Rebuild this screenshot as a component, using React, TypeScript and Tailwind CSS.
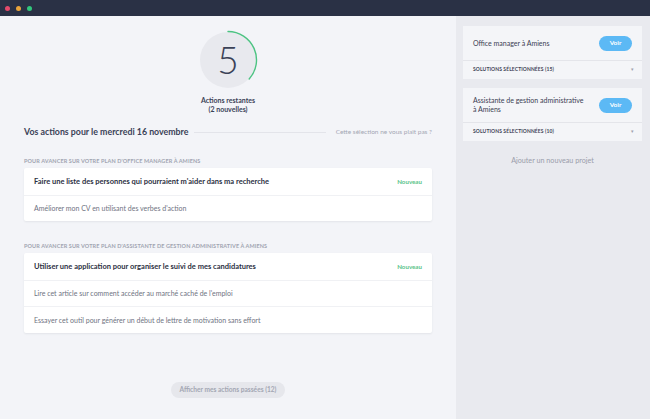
import React from 'react';

/**
 * 待办行动页面：左侧为今日行动，右侧为项目列表
 */
const sections = [
  {
    label: "Pour avancer sur votre plan d'office manager à Amiens",
    items: [
      { text: "Faire une liste des personnes qui pourraient m'aider dans ma recherche", isNew: true },
      { text: "Améliorer mon CV en utilisant des verbes d'action", isNew: false },
    ],
  },
  {
    label: "Pour avancer sur votre plan d'assistante de gestion administrative à Amiens",
    items: [
      { text: 'Utiliser une application pour organiser le suivi de mes candidatures', isNew: true },
      { text: "Lire cet article sur comment accéder au marché caché de l'emploi", isNew: false },
      { text: 'Essayer cet outil pour générer un début de lettre de motivation sans effort', isNew: false },
    ],
  },
];

const projects = [
  { title: ['Office manager à Amiens'], count: 15 },
  { title: ['Assistante de gestion administrative', 'à Amiens'], count: 10 },
];

// 进度圆环
const Counter: React.FC = () => (
  <div className="relative w-[60px] h-[60px]">
    <svg width="60" height="60" viewBox="0 0 60 60" className="absolute inset-0">
      <circle cx="30" cy="30" r="28" fill="#e8e9ee" />
      <path d="M30 1.5 A28.5 28.5 0 0 1 51.18 49.07" fill="none" stroke="#4cc382" strokeWidth="1.4" strokeLinecap="round" />
    </svg>
    <div className="absolute inset-0 flex items-center justify-center text-[37px] font-light leading-none text-[#3b4257] pb-[1px]">
      5
    </div>
  </div>
);

const App: React.FC = () => {
  return (
    <div className="w-[650px] h-[419px] flex flex-col overflow-hidden bg-[#f3f4f8]" style={{ fontFamily: 'Lato, "Open Sans", sans-serif' }}>
      {/* 窗口标题栏 */}
      <div className="h-[16px] bg-[#2a3145] flex items-center gap-[6px] pl-[5px] shrink-0">
        <span className="w-[5px] h-[5px] rounded-full bg-[#e54a6b]" />
        <span className="w-[5px] h-[5px] rounded-full bg-[#eaa53c]" />
        <span className="w-[5px] h-[5px] rounded-full bg-[#31c77c]" />
      </div>

      <div className="flex flex-1 min-h-0">
        {/* 主区域 */}
        <div className="w-[456px] px-[24px] flex flex-col">
          <div className="flex flex-col items-center pt-[14px]">
            <Counter />
            <div className="mt-[6px] text-center text-[7px] leading-[9px] font-bold text-[#3b4257]">
              <div>Actions restantes</div>
              <div>(2 nouvelles)</div>
            </div>
          </div>

          <div className="mt-[12px] flex items-center h-[12px]">
            <span className="text-[8.8px] font-bold text-[#3b4257] whitespace-nowrap">Vos actions pour le mercredi 16 novembre</span>
            <span className="flex-1 h-px bg-[#e3e4ea] ml-[6px] mr-[10px]" />
            <span className="text-[6.5px] text-[#a4a7b4] whitespace-nowrap">Cette sélection ne vous plaît pas ?</span>
          </div>

          {sections.map((section, si) => (
            <div key={si} className={si === 0 ? 'mt-[19px]' : 'mt-[21px]'}>
              <div className="text-[5.5px] leading-[8px] font-bold uppercase tracking-[0.02em] text-[#a1a4b1]">
                {section.label}
              </div>
              <div className="mt-[3px] bg-white rounded-[2px] shadow-[0_1px_2px_rgba(40,45,70,0.08)]">
                {section.items.map((item, ii) => (
                  <div
                    key={ii}
                    className={`h-[26.6px] flex items-center justify-between px-[10px] ${ii > 0 ? 'border-t border-[#f0f1f4]' : ''}`}
                  >
                    <span className={item.isNew ? 'text-[7.5px] font-bold text-[#2b2f3f]' : 'text-[7px] text-[#6f7382]'}>
                      {item.text}
                    </span>
                    {item.isNew && <span className="text-[6.2px] font-bold text-[#5bc48a]">Nouveau</span>}
                  </div>
                ))}
              </div>
            </div>
          ))}

          <div className="flex justify-center mt-[49px]">
            <button className="h-[16px] px-[9px] rounded-full bg-[#e6e7ec] text-[6.6px] font-bold text-[#a3a6b3]">
              Afficher mes actions passées (12)
            </button>
          </div>
        </div>

        {/* 右侧项目栏 */}
        <div className="flex-1 bg-[#e9eaef] pl-[7px] pr-[8px] pt-[10px] flex flex-col">
          {projects.map((p, i) => (
            <div key={i} className={`bg-[#f4f5f8] ${i > 0 ? 'mt-[9px]' : ''}`}>
              <div className="h-[35px] flex items-center justify-between pl-[10px] pr-[10px] border-b border-[#e4e5ea]">
                <div className="text-[7px] leading-[9px] text-[#3b4052]">
                  {p.title.map((t, ti) => (
                    <div key={ti}>{t}</div>
                  ))}
                </div>
                <button className="w-[33px] h-[15px] rounded-full bg-[#5cb9f5] text-white text-[6.4px] font-bold">
                  Voir
                </button>
              </div>
              <div className="h-[18px] flex items-center justify-between pl-[10px] pr-[8px]">
                <span className="text-[5px] font-bold uppercase tracking-[0.02em] text-[#3f4456]">
                  Solutions sélectionnées ({p.count})
                </span>
                <span className="text-[5px] text-[#9ea1ae]">▾</span>
              </div>
            </div>
          ))}
          <div className="mt-[15px] text-center text-[7.2px] text-[#9a9dab]">Ajouter un nouveau projet</div>
        </div>
      </div>
    </div>
  );
};

export default App;
